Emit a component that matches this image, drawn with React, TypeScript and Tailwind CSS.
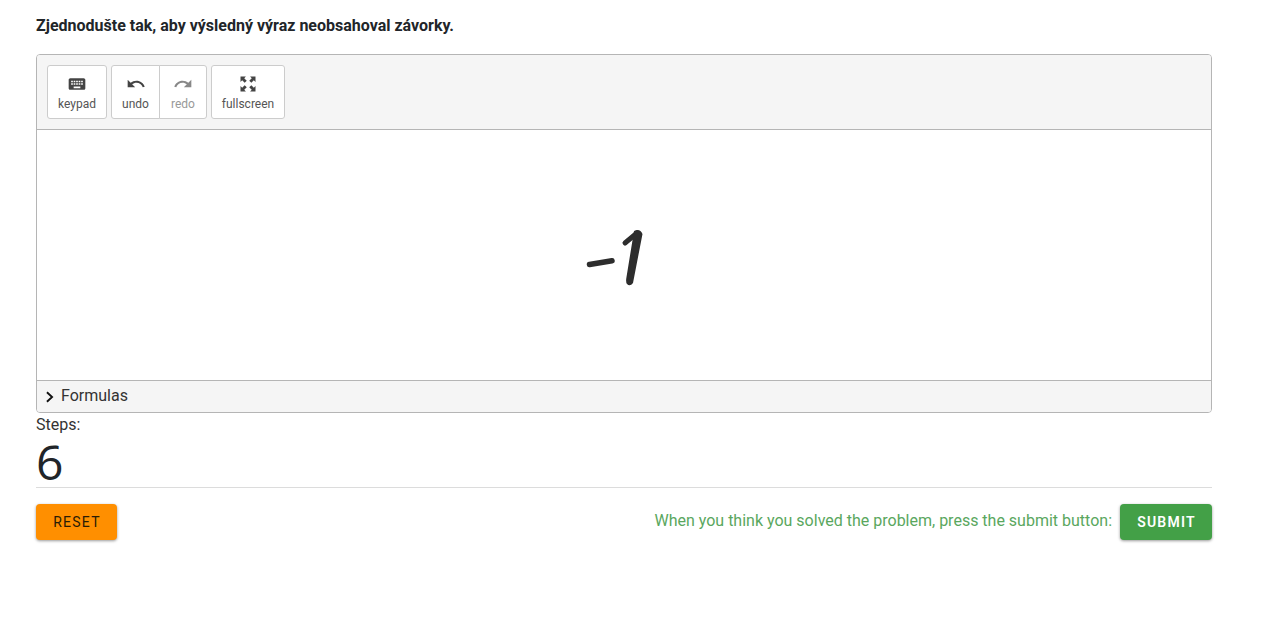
function ToolButton({
  label,
  d,
  disabled,
  className,
}: {
  label: string;
  d: string;
  disabled?: boolean;
  className: string;
}) {
  return (
    <button
      className={`flex h-[54px] flex-col items-center border border-[#ccc] bg-white pt-[8px] text-[12px] leading-[14px] ${
        disabled ? "text-[#999]" : "text-[#555]"
      } ${className}`}
    >
      <svg
        viewBox="0 0 24 24"
        className={`h-[20px] w-[20px] ${disabled ? "fill-[#888]" : "fill-[#444]"}`}
      >
        <path d={d} />
      </svg>
      <span className="mt-[3px]">{label}</span>
    </button>
  );
}

const keyboard =
  "M20 5H4c-1.1 0-1.99.9-1.99 2L2 17c0 1.1.9 2 2 2h16c1.1 0 2-.9 2-2V7c0-1.1-.9-2-2-2zm-9 3h2v2h-2V8zm0 3h2v2h-2v-2zM8 8h2v2H8V8zm0 3h2v2H8v-2zm-1 2H5v-2h2v2zm0-3H5V8h2v2zm9 7H8v-2h8v2zm0-4h-2v-2h2v2zm0-3h-2V8h2v2zm3 3h-2v-2h2v2zm0-3h-2V8h2v2z";
const undo =
  "M12.5 8c-2.65 0-5.05.99-6.9 2.6L2 7v9h9l-3.62-3.62c1.39-1.16 3.16-1.88 5.12-1.88 3.54 0 6.55 2.31 7.6 5.5l2.37-.78C21.08 11.03 17.15 8 12.5 8z";
const redo =
  "M18.4 10.6C16.55 8.99 14.15 8 11.5 8c-4.65 0-8.58 3.03-9.96 7.22L3.9 16c1.05-3.19 4.05-5.5 7.6-5.5 1.95 0 3.73.72 5.12 1.88L13 16h9V7l-3.6 3.6z";
const expand =
  "M3 3h6.5L7.5 5l3 3L8 10.5l-3-3-2 2zM21 3v6.5l-2-2-3 3L13.5 8l3-3-2-2zM3 21v-6.5l2 2 3-3 2.5 2.5-3 3 2 2zM21 21h-6.5l2-2-3-3 2.5-2.5 3 3 2-2z";

export default function App() {
  return (
    <div className="min-h-[624px] bg-white pl-[36px] font-['Roboto',sans-serif] text-[#212529]">
      <div className="w-[1176px] pt-[16px]">
        <p className="text-[16px] leading-[19px] font-bold">
          Zjednodušte tak, aby výsledný výraz neobsahoval závorky.
        </p>

        <div className="mt-[19px] overflow-hidden rounded-[4px] border border-[#b5b5b5]">
          <div className="flex h-[75px] gap-[4px] border-b border-[#b5b5b5] bg-[#f5f5f5] pt-[10px] pl-[10px]">
            <ToolButton label="keypad" d={keyboard} className="w-[60px] rounded-[3px]" />
            <div className="flex">
              <ToolButton label="undo" d={undo} className="w-[49px] rounded-l-[3px]" />
              <ToolButton
                label="redo"
                d={redo}
                disabled
                className="-ml-px w-[48px] rounded-r-[3px]"
              />
            </div>
            <ToolButton label="fullscreen" d={expand} className="w-[74px] rounded-[3px]" />
          </div>

          <div className="flex h-[250px] items-center justify-center bg-white">
            <svg viewBox="586 226 76 58" className="h-[58px] w-[76px] overflow-visible" fill="none">
              <path
                d="M589.5 264.5 L612 260.8"
                stroke="#2d2d2d"
                strokeWidth="5.5"
                strokeLinecap="round"
              />
              <path
                d="M625 243 L637 233"
                stroke="#2d2d2d"
                strokeWidth="5"
                strokeLinecap="round"
              />
              <path
                d="M634 231 Q640 228 642.5 234 L633 283 Q630 287 627 284 Q625.5 282 626.5 277 Z"
                fill="#2d2d2d"
              />
            </svg>
          </div>

          <div className="flex h-[32px] items-center border-t border-[#b5b5b5] bg-[#f5f5f5] pl-[8px] text-[16px] text-[#333]">
            <svg viewBox="0 0 10 14" className="h-[12px] w-[9px]" fill="none">
              <path d="M2 1.5 L8 7 L2 12.5" stroke="#111" strokeWidth="2.2" />
            </svg>
            <span className="mb-[2px] ml-[7px]">Formulas</span>
          </div>
        </div>

        <p className="mt-[2px] text-[16px] leading-[19px] text-[#333]">Steps:</p>
        <div className="h-[53px] pt-[4px] font-['Open_Sans',sans-serif] text-[48px] leading-[47px]">
          6
        </div>
        <div className="border-t border-[#dcdcdc]" />

        <div className="mt-[16px] flex items-center justify-between">
          <button className="h-[36px] w-[81px] rounded-[4px] bg-[#ff8f00] pl-px text-[14px] font-normal tracking-[1.25px] text-[#2a1c05] shadow-[0_1px_3px_rgba(0,0,0,0.4)]">
            RESET
          </button>
          <div className="flex items-center gap-[8px]">
            <span className="mb-[3px] text-[16px] text-[#5aa75e]">
              When you think you solved the problem, press the submit button:
            </span>
            <button className="h-[36px] w-[92px] rounded-[4px] bg-[#43a047] pl-px text-[14px] font-semibold tracking-[1.2px] text-white shadow-[0_1px_3px_rgba(0,0,0,0.4)]">
              SUBMIT
            </button>
          </div>
        </div>
      </div>
    </div>
  );
}
